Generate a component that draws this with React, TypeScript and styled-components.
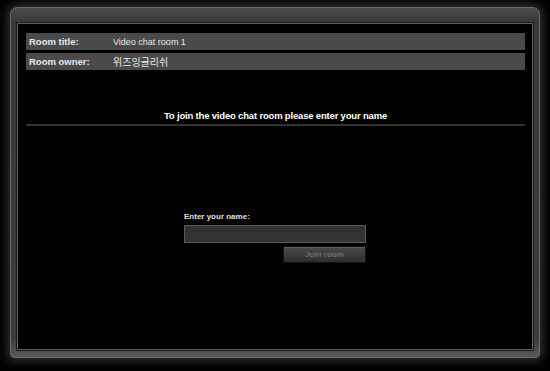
import React from "react";
import styled, { createGlobalStyle } from "styled-components";

const Global = createGlobalStyle`
  html, body { margin: 0; padding: 0; background: #000; }
  body { width: 550px; height: 371px; overflow: hidden; font-family: "Liberation Sans", Arial, sans-serif; }
`;

const Page = styled.div`
  padding: 7px 10px 0 10px;
`;

const Frame = styled.div`
  width: 530px;
  height: 351px;
  box-sizing: border-box;
  border: 1px solid #6a6a6a;
  border-radius: 7px 7px 4px 4px;
  background: linear-gradient(#4a4a4a, #383838 15px, #3c3c3c 95%, #5a5a5a);
  box-shadow: 0 0 10px 3px rgba(160, 160, 160, 0.3);
  display: flex;
  flex-direction: column;
  padding: 15px 6px 7px 6px;
`;

const Panel = styled.div`
  flex: 1;
  background: #000;
  border: 1px solid #5c5c5c;
  box-shadow: 0 0 0 1px #1c1c1c;
  display: flex;
  flex-direction: column;
  padding: 9px 7px 0 8px;
`;

const InfoRow = styled.div`
  display: flex;
  align-items: center;
  height: 17px;
  background: #4a4a4a;
  margin-bottom: 3px;
  font-size: 9px;
  color: #e8e8e8;
`;

const Label = styled.span`
  width: 87px;
  padding-left: 3px;
  box-sizing: border-box;
  font-weight: bold;
  font-size: 9.5px;
`;

const Value = styled.span<{ $cjk?: boolean }>`
  font-family: "Liberation Sans", "Noto Sans CJK KR", sans-serif;
  font-size: ${(p) => (p.$cjk ? "10px" : "9px")};
`;

const Heading = styled.div`
  margin-top: 37px;
  text-align: center;
  font-size: 9.5px;
  letter-spacing: -0.18px;
  font-weight: bold;
  color: #fff;
  padding-bottom: 3px;
  border-bottom: 2px solid #333;
`;

const Form = styled.div`
  margin: 86px 0 0 158px;
  width: 182px;
  display: flex;
  flex-direction: column;
`;

const FormLabel = styled.label`
  font-size: 8px;
  font-weight: bold;
  color: #e0e0e0;
  margin-bottom: 4px;
`;

const NameInput = styled.input`
  height: 18px;
  box-sizing: border-box;
  background: #333;
  border: 1px solid #5a5a5a;
  outline: none;
  color: #ddd;
  font-size: 10px;
`;

const JoinButton = styled.button`
  align-self: flex-end;
  margin-top: 3px;
  width: 83px;
  height: 17px;
  box-sizing: border-box;
  border: 1px solid #111;
  box-shadow: inset 0 1px 0 #5c5c5c;
  background: linear-gradient(#4a4a4a, #2e2e2e);
  color: #6e6e6e;
  font-family: "Liberation Sans", sans-serif;
  font-size: 8px;
  font-weight: bold;
  padding: 0;
`;

export default function App() {
  return (
    <Page>
      <Global />
      <Frame>
        <Panel>
          <InfoRow>
            <Label>Room title:</Label>
            <Value>Video chat room 1</Value>
          </InfoRow>
          <InfoRow>
            <Label>Room owner:</Label>
            <Value $cjk>위즈잉글리쉬</Value>
          </InfoRow>
          <Heading>To join the video chat room please enter your name</Heading>
          <Form>
            <FormLabel>Enter your name:</FormLabel>
            <NameInput type="text" />
            <JoinButton>Join room</JoinButton>
          </Form>
        </Panel>
      </Frame>
    </Page>
  );
}
